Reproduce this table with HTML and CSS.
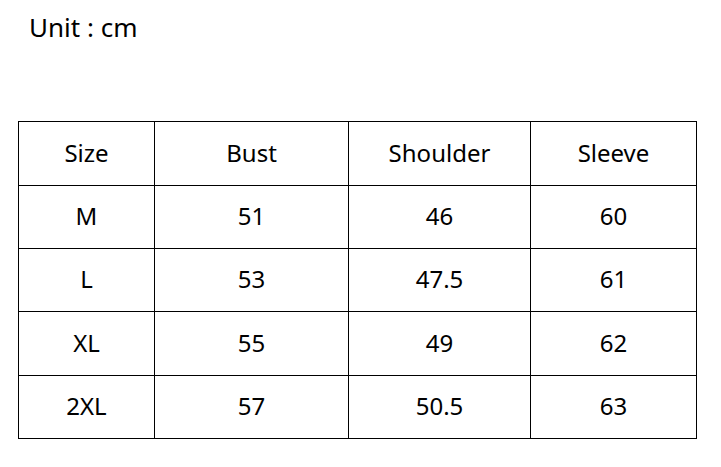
FILE: index.html
```html
<!DOCTYPE html>
<html>
<head>
<meta charset="utf-8">
<link rel="stylesheet" href="styles.css">
</head>
<body>
<div class="page">
  <div class="unit">Unit : cm</div>
  <table class="size-table">
    <colgroup>
      <col class="c1"><col class="c2"><col class="c3"><col class="c4">
    </colgroup>
    <tr class="r1"><td>Size</td><td>Bust</td><td>Shoulder</td><td>Sleeve</td></tr>
    <tr class="r2"><td>M</td><td>51</td><td>46</td><td>60</td></tr>
    <tr class="r3"><td>L</td><td>53</td><td>47.5</td><td>61</td></tr>
    <tr class="r4"><td>XL</td><td>55</td><td>49</td><td>62</td></tr>
    <tr class="r5"><td>2XL</td><td>57</td><td>50.5</td><td>63</td></tr>
  </table>
</div>
</body>
</html>
```
FILE: styles.css
```css
html, body {
  margin: 0;
  padding: 0;
  background: #ffffff;
}
body {
  font-family: "Noto Sans", "Open Sans", sans-serif;
  color: #000000;
}
.page {
  padding: 10px 0 0 18px;
}
.unit {
  font-size: 26px;
  line-height: 34px;
  padding-left: 11px;
}
.size-table {
  margin-top: 77px;
  border-collapse: collapse;
  table-layout: fixed;
  width: 679px;
  font-size: 24px;
}
.size-table td {
  border: 1px solid #000;
  text-align: center;
  padding: 0 0 2px 0;
  height: 60px;
  line-height: 30px;
}
.size-table .r1 td, .size-table .r4 td { height: 61px; }
.c1 { width: 136px; }
.c2 { width: 194px; }
.c3 { width: 182px; }
.c4 { width: 166px; }
```
